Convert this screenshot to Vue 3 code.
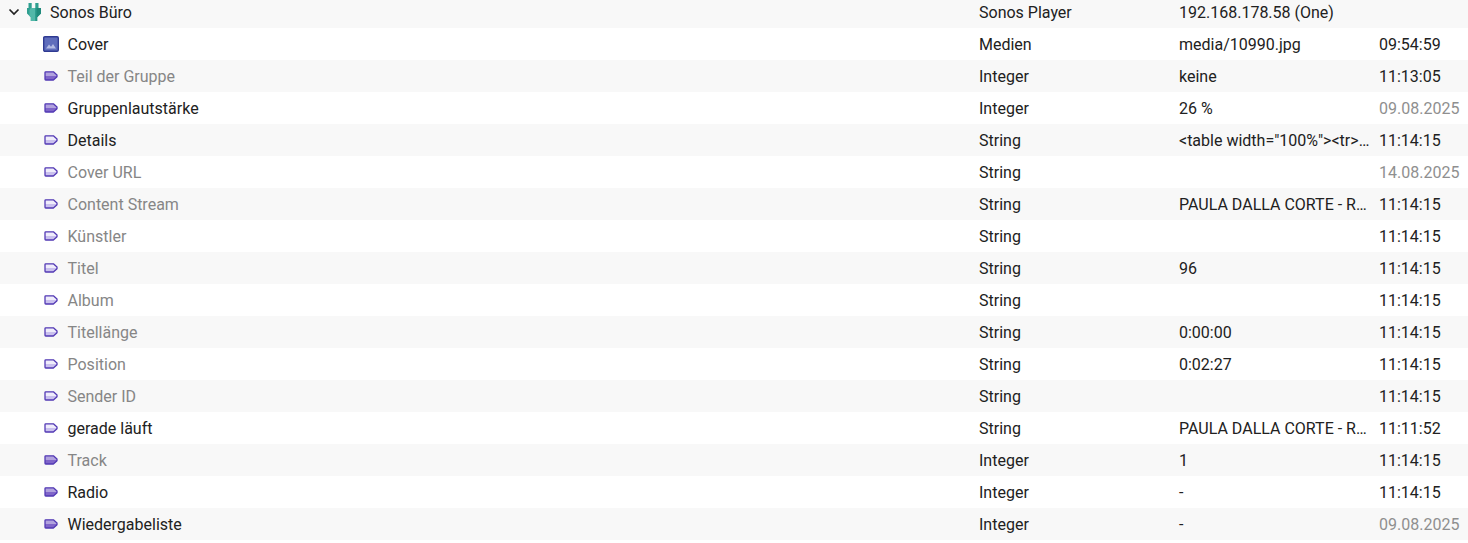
<script setup>
const rows = [
  { name: 'Cover', icon: 'media', type: 'Medien', value: 'media/10990.jpg', time: '09:54:59' },
  { name: 'Teil der Gruppe', icon: 'int', muted: true, type: 'Integer', value: 'keine', time: '11:13:05' },
  { name: 'Gruppenlautstärke', icon: 'int', type: 'Integer', value: '26 %', time: '09.08.2025', old: true },
  { name: 'Details', icon: 'str', type: 'String', value: '<table width="100%"><tr>…', time: '11:14:15' },
  { name: 'Cover URL', icon: 'str', muted: true, type: 'String', value: '', time: '14.08.2025', old: true },
  { name: 'Content Stream', icon: 'str', muted: true, type: 'String', value: 'PAULA DALLA CORTE - R…', time: '11:14:15' },
  { name: 'Künstler', icon: 'str', muted: true, type: 'String', value: '', time: '11:14:15' },
  { name: 'Titel', icon: 'str', muted: true, type: 'String', value: '96', time: '11:14:15' },
  { name: 'Album', icon: 'str', muted: true, type: 'String', value: '', time: '11:14:15' },
  { name: 'Titellänge', icon: 'str', muted: true, type: 'String', value: '0:00:00', time: '11:14:15' },
  { name: 'Position', icon: 'str', muted: true, type: 'String', value: '0:02:27', time: '11:14:15' },
  { name: 'Sender ID', icon: 'str', muted: true, type: 'String', value: '', time: '11:14:15' },
  { name: 'gerade läuft', icon: 'str', type: 'String', value: 'PAULA DALLA CORTE - R…', time: '11:11:52' },
  { name: 'Track', icon: 'int', muted: true, type: 'Integer', value: '1', time: '11:14:15' },
  { name: 'Radio', icon: 'int', type: 'Integer', value: '-', time: '11:14:15' },
  { name: 'Wiedergabeliste', icon: 'int', type: 'Integer', value: '-', time: '09.08.2025', old: true },
]
</script>

<template>
  <div class="tree">
    <div class="row">
      <div class="name root">
        <svg class="chev" width="12" height="8" viewBox="0 0 12 8"><path d="M1.5 1.5 6 6l4.500-4.500" fill="none" stroke="#222" stroke-width="1.7"/></svg>
        <svg class="plug" width="14" height="20" viewBox="0 0 14 20">
          <path d="M1.500 1h3.200v5h3.600V1h3.200v5H14v5.500l-3.800 3.800V19H3.800v-3.700L0 11.500V6h1.500z" fill="#2f9f90"/>
          <path d="M3.800 6H8v13H3.800v-3.700L2.500 14V8z" fill="#52b8a9"/>
          <path d="M9.500 6H14v5.500l-3.800 3.800V19H9.500z" fill="#1f8a7b"/>
        </svg>
        <span>Sonos Büro</span>
      </div>
      <div class="type">Sonos Player</div>
      <div class="value">192.168.178.58 (One)</div>
      <div class="time"></div>
    </div>
    <div v-for="r in rows" :key="r.name" class="row">
      <div class="name child">
        <svg v-if="r.icon === 'media'" class="ic" width="16" height="16" viewBox="0 0 16 16">
          <rect x=".7" y=".7" width="14.600" height="14.600" rx="1.200" fill="#5f6dbc" stroke="#2f3a92" stroke-width="1.400"/>
          <path d="M3 12.500 6 8.500l2 2.200 2-2.700 3 4.500z" fill="#b3bbe4"/>
        </svg>
        <svg v-else class="ic" width="16" height="16" viewBox="0 0 16 16">
          <path d="M2.700 3.800H10.400L14 7v1.800L10.400 12H2.700a.7.7 0 0 1-.7-.7V4.500a.7.7 0 0 1 .7-.7z" :fill="r.icon === 'int' ? '#b1a2de' : '#efecfb'"/>
          <path d="M2 8h12v.8L10.400 12H2.700a.7.7 0 0 1-.7-.7z" :fill="r.icon === 'int' ? '#7f65c9' : '#c9c0ee'"/>
          <path d="M2.700 3.800H10.400L14 7v1.800L10.400 12H2.700a.7.7 0 0 1-.7-.7V4.500a.7.7 0 0 1 .7-.7z" fill="none" stroke="#5239b4" stroke-width="1.300" stroke-linejoin="round"/>
        </svg>
        <span :class="{ muted: r.muted }">{{ r.name }}</span>
      </div>
      <div class="type">{{ r.type }}</div>
      <div class="value">{{ r.value }}</div>
      <div class="time" :class="{ old: r.old }">{{ r.time }}</div>
    </div>
  </div>
</template>

<style>
html, body { background: #fff; overflow: hidden; }
</style>

<style scoped>
.tree {
  margin-top: -4px;
  font-family: Roboto, "Liberation Sans", sans-serif;
  font-size: 16px;
  color: #212121;
}
.row {
  display: grid;
  grid-template-columns: 979px 200px 200px 1fr;
  height: 32px;
  align-items: center;
  white-space: nowrap;
}
.row:nth-child(odd) { background: #f8f8f8; }
.name { display: flex; align-items: center; min-width: 0; }
.root { padding-left: 8px; }
.chev { margin-right: 7px; }
.plug { margin-right: 9px; }
.child { padding-left: 43px; }
.ic { margin-right: 8.5px; flex: none; }
.muted { color: #868686; }
.old { color: #8f8f8f; }
</style>
